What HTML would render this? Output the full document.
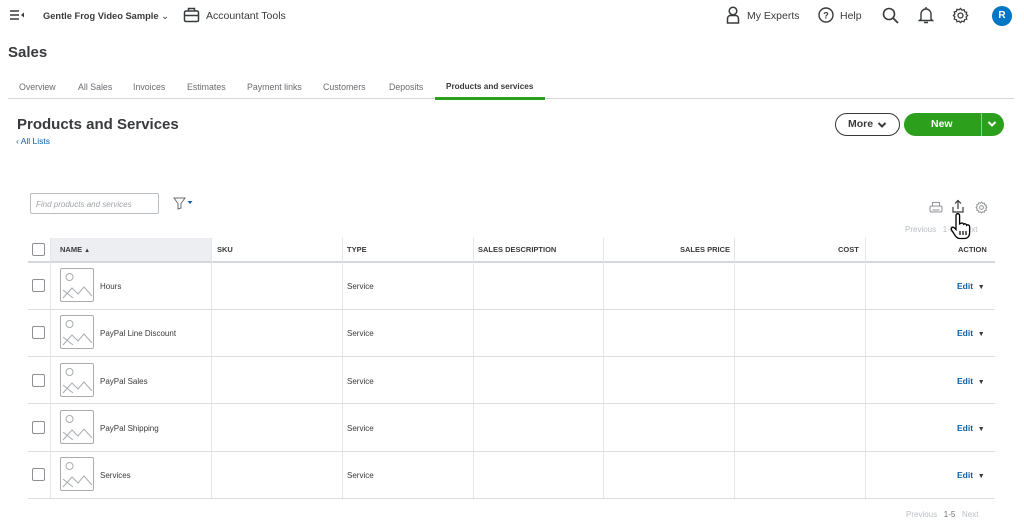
<!DOCTYPE html>
<html><head><style>
*{box-sizing:border-box;margin:0;padding:0}
body{width:1024px;height:528px;overflow:hidden;background:#fff;font-family:"Liberation Sans",sans-serif;color:#393a3d;position:relative}
.a{position:absolute;white-space:nowrap}
.tab{font-size:8.8px;color:#6b6c72;top:82px}
.hd{font-size:7.5px;font-weight:bold;color:#393a3d;top:245px}
.cell{font-size:8px;color:#393a3d}
.cb{position:absolute;width:13px;height:13px;border:1px solid #8d9096;border-radius:2px;left:32px;background:#fff}
.vl{position:absolute;top:238px;height:260px;width:1px;background:#e3e5e8}
.hl{position:absolute;left:28px;width:967px;height:1px;background:#dcdee2}
.edit{font-size:8.5px;font-weight:bold;color:#0d5fa6}
</style></head><body>
<svg class="a" style="left:9px;top:9px" width="16" height="12" viewBox="0 0 16 12"><path d="M1 2h9M1 6h9M1 10h9" stroke="#393a3d" stroke-width="1.5"/><path d="M15 3.5v5l-3-2.5z" fill="#393a3d"/></svg>
<div class="a" style="left:43px;top:11px;font-size:9.3px;font-weight:bold;color:#393a3d">Gentle Frog Video Sample <span style="font-weight:normal">&#8964;</span></div>
<svg class="a" style="left:183px;top:7px" width="17" height="16" viewBox="0 0 17 16"><rect x="1.5" y="4" width="14" height="10.5" rx="1.5" fill="none" stroke="#393a3d" stroke-width="1.5"/><path d="M5.5 4V1.5h6V4M1.5 8.5h14" fill="none" stroke="#393a3d" stroke-width="1.5"/></svg>
<div class="a" style="left:206px;top:10px;font-size:10.5px;color:#393a3d">Accountant Tools</div>
<svg class="a" style="left:726px;top:6px" width="14" height="18" viewBox="0 0 14 18"><circle cx="7" cy="5" r="3.8" fill="none" stroke="#393a3d" stroke-width="1.5"/><path d="M1.5 17v-4.5a3 3 0 0 1 3-3h5a3 3 0 0 1 3 3V17z" fill="none" stroke="#393a3d" stroke-width="1.5"/></svg>
<div class="a" style="left:747px;top:10px;font-size:10.5px">My Experts</div>
<svg class="a" style="left:818px;top:7px" width="16" height="16" viewBox="0 0 16 16"><circle cx="8" cy="8" r="7" fill="none" stroke="#393a3d" stroke-width="1.4"/><text x="8" y="11.5" font-size="9" font-weight="bold" text-anchor="middle" fill="#393a3d" font-family="Liberation Sans">?</text></svg>
<div class="a" style="left:840px;top:10px;font-size:10.5px">Help</div>
<svg class="a" style="left:882px;top:7px" width="17" height="17" viewBox="0 0 17 17"><circle cx="7" cy="7" r="5.5" fill="none" stroke="#393a3d" stroke-width="1.6"/><path d="M11 11l5 5" stroke="#393a3d" stroke-width="1.8"/></svg>
<svg class="a" style="left:918px;top:6px" width="16" height="18" viewBox="0 0 16 18"><path d="M3 13V8a5 5 0 0 1 10 0v5l1.5 1.5h-13z" fill="none" stroke="#393a3d" stroke-width="1.4"/><path d="M8 1v2M6 16.5h4" stroke="#393a3d" stroke-width="1.4"/></svg>
<svg class="a" style="left:952px;top:7px" width="17" height="17" viewBox="0 0 24 24"><path d="M12 2l2 2.5 3-.8.8 3 3 .8-.8 3L22 12l-2 2 .8 3-3 .8-.8 3-3-.8L12 22l-2-2-3 .8-.8-3-3-.8.8-3L2 12l2-2-.8-3 3-.8.8-3 3 .8z" fill="none" stroke="#393a3d" stroke-width="1.8"/><circle cx="12" cy="12" r="3.5" fill="none" stroke="#393a3d" stroke-width="1.8"/></svg>
<div class="a" style="left:992px;top:6px;width:20px;height:20px;border-radius:50%;background:#0077c5;color:#fff;font-size:10px;font-weight:bold;text-align:center;line-height:20px">R</div>
<div class="a" style="left:8px;top:44px;font-size:15px;font-weight:bold;color:#393a3d">Sales</div>
<div class="a tab" style="left:19px">Overview</div>
<div class="a tab" style="left:78px">All Sales</div>
<div class="a tab" style="left:133px">Invoices</div>
<div class="a tab" style="left:187px">Estimates</div>
<div class="a tab" style="left:247px">Payment links</div>
<div class="a tab" style="left:323px">Customers</div>
<div class="a tab" style="left:389px">Deposits</div>
<div class="a tab" style="left:446px;color:#393a3d;font-weight:bold;font-size:8.2px">Products and services</div>
<div class="a" style="left:8px;top:98px;width:1006px;height:1px;background:#d4d7dc"></div>
<div class="a" style="left:435px;top:97px;width:110px;height:3px;background:#2ca01c"></div>
<div class="a" style="left:17px;top:116px;font-size:15px;font-weight:bold;color:#393a3d">Products and Services</div>
<div class="a" style="left:16px;top:136px;font-size:8.5px;color:#0d5fa6">&#8249; All Lists</div>
<div class="a" style="left:835px;top:113px;width:65px;height:23px;border:1.5px solid #393a3d;border-radius:12px;font-size:10.5px;font-weight:bold;line-height:20px;padding-left:12px">More</div>
<svg class="a" style="left:877px;top:121px" width="10" height="8" viewBox="0 0 10 8"><path d="M1.5 2l3.5 3.5L8.5 2" fill="none" stroke="#393a3d" stroke-width="2"/></svg>
<div class="a" style="left:904px;top:113px;width:100px;height:23px;border-radius:12px;background:#2ca01c"></div>
<div class="a" style="left:931px;top:118px;font-size:10.5px;font-weight:bold;color:#fff">New</div>
<div class="a" style="left:981px;top:113px;width:1px;height:23px;background:#8ed07f"></div>
<svg class="a" style="left:987px;top:120px" width="10" height="8" viewBox="0 0 10 8"><path d="M1.5 2l3.5 3.5L8.5 2" fill="none" stroke="#fff" stroke-width="2"/></svg>
<div class="a" style="left:30px;top:193px;width:129px;height:21px;border:1px solid #babec5;border-radius:2px;font-size:8px;font-style:italic;color:#a0a3a8;padding:6px 0 0 5px">Find products and services</div>
<svg class="a" style="left:173px;top:197px" width="22" height="13" viewBox="0 0 22 13"><path d="M1 1h11L8 6.5V11L5 12V6.5z" fill="none" stroke="#6b6c72" stroke-width="1"/><path d="M14.5 4h5l-2.5 3z" fill="#0d5fa6"/></svg>
<svg class="a" style="left:929px;top:201px" width="14" height="14" viewBox="0 0 14 14"><rect x="1" y="5" width="12" height="6" rx="1.5" fill="none" stroke="#8d9096"/><path d="M3.5 5V1.5h7V5M3.5 9h7" fill="none" stroke="#8d9096"/></svg>
<svg class="a" style="left:951px;top:199px" width="14" height="15" viewBox="0 0 14 15"><path d="M7 10V1.5M4 4.5L7 1.5l3 3M2 8v5h10V8" fill="none" stroke="#393a3d" stroke-width="1.2"/></svg>
<svg class="a" style="left:975px;top:201px" width="13" height="13" viewBox="0 0 24 24"><path d="M12 2l2 2.5 3-.8.8 3 3 .8-.8 3L22 12l-2 2 .8 3-3 .8-.8 3-3-.8L12 22l-2-2-3 .8-.8-3-3-.8.8-3L2 12l2-2-.8-3 3-.8.8-3 3 .8z" fill="none" stroke="#8d9096" stroke-width="1.8"/><circle cx="12" cy="12" r="3.5" fill="none" stroke="#8d9096" stroke-width="1.8"/></svg>
<div class="a" style="left:905px;top:225px;font-size:8px;color:#babec5">Previous&nbsp;&nbsp;&nbsp;1-5&nbsp;&nbsp;&nbsp;Next</div>
<svg class="a" style="left:950px;top:212px" width="22" height="28" viewBox="0 0 22 28"><path d="M6 14V3.5a1.8 1.8 0 0 1 3.6 0V12l1-.5a1.8 1.8 0 0 1 3 .8 1.8 1.8 0 0 1 3 1 1.8 1.8 0 0 1 3 1.2V21c0 3-2 5.5-5 5.5H10c-2 0-3.5-1-4.5-2.5L1.5 18a1.8 1.8 0 0 1 2.8-2.2L6 17.5z" fill="#fff" stroke="#000" stroke-width="1.3"/><path d="M10 19v4M13 19v4M16 19v4" stroke="#000" stroke-width="1.2"/></svg>
<div class="a" style="left:50px;top:238px;width:161px;height:23px;background:#eceef1"></div>
<div class="hl" style="top:261px;height:2px;background:#d4d7dc"></div>
<div class="hl" style="top:309px"></div><div class="hl" style="top:356px"></div><div class="hl" style="top:403px"></div><div class="hl" style="top:451px"></div><div class="hl" style="top:498px"></div>
<div class="vl" style="left:50px"></div><div class="vl" style="left:211px"></div><div class="vl" style="left:342px"></div><div class="vl" style="left:473px"></div><div class="vl" style="left:603px"></div><div class="vl" style="left:734px"></div><div class="vl" style="left:865px"></div>
<div class="cb" style="top:243px"></div>
<div class="a hd" style="left:60px">NAME <span style="font-size:6px">&#9650;</span></div>
<div class="a hd" style="left:217px">SKU</div>
<div class="a hd" style="left:347px">TYPE</div>
<div class="a hd" style="left:478px">SALES DESCRIPTION</div>
<div class="a hd" style="left:680px">SALES PRICE</div>
<div class="a hd" style="left:838px">COST</div>
<div class="a hd" style="left:958px">ACTION</div>
<div id="rows"></div>
<script>
var names=["Hours","PayPal Line Discount","PayPal Sales","PayPal Shipping","Services"];
var h="";
for(var i=0;i<5;i++){var t=262+i*47.3;
h+='<div class="cb" style="top:'+(t+17)+'px"></div>';
h+='<svg class="a" style="left:60px;top:'+(t+6)+'px" width="34" height="34" viewBox="0 0 34 34"><rect x="0.5" y="0.5" width="33" height="33" rx="1.5" fill="#fff" stroke="#a9acb1"/><circle cx="9.5" cy="9" r="3.5" fill="none" stroke="#a9acb1"/><path d="M3 30l9-10 6 6 6-7 8 9M3 22l10 8" fill="none" stroke="#a9acb1"/></svg>';
h+='<div class="a cell" style="left:100px;top:'+(t+20)+'px">'+names[i]+'</div>';
h+='<div class="a cell" style="left:347px;top:'+(t+20)+'px">Service</div>';
h+='<div class="a edit" style="left:957px;top:'+(t+19)+'px">Edit&nbsp;&nbsp;<span style="color:#393a3d;font-size:7px">&#9660;</span></div>';}
document.getElementById("rows").innerHTML=h;
</script>
<div class="a" style="left:906px;top:510px;font-size:8px;color:#babec5">Previous&nbsp;&nbsp;&nbsp;<span style="color:#6b6c72">1-5</span>&nbsp;&nbsp;&nbsp;Next</div>
</body></html>
